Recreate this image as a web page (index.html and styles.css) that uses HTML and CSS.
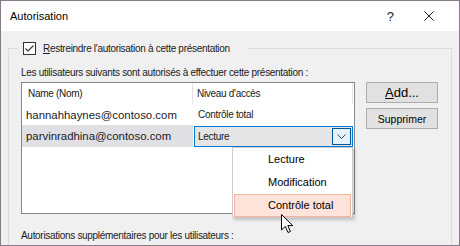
FILE: index.html
```html
<!DOCTYPE html>
<html lang="fr">
<head>
    <meta charset="UTF-8">
    <meta name="viewport" content="width=device-width, initial-scale=1.0">
    <title>Autorisation</title>
    <link rel="stylesheet" href="styles.css">
</head>
<body>
    <div class="dialog">
        <!-- Title bar -->
        <div class="titlebar">
            <span class="title">Autorisation</span>
            <div class="title-buttons">
                <span class="help">?</span>
                <svg class="close" width="10" height="10" viewBox="0 0 10 10">
                    <path d="M0.5 0.5 L9.5 9.5 M9.5 0.5 L0.5 9.5" stroke="#1a1a1a" stroke-width="1" fill="none"/>
                </svg>
            </div>
        </div>

        <!-- Dialog body -->
        <div class="dialog-body">
            <fieldset class="group">
                <legend class="group-legend">
                    <span class="checkbox">
                        <svg width="11" height="11" viewBox="0 0 11 11">
                            <polyline points="1.5,5.5 4,8 9.5,2.5" stroke="#333" stroke-width="1.1" fill="none"/>
                        </svg>
                    </span>
                    <span class="check-label small"><u>R</u>estreindre l'autorisation à cette présentation</span>
                </legend>

                <p class="hint small">Les utilisateurs suivants sont autorisés à effectuer cette présentation :</p>

                <div class="users-row">
                    <div class="user-list">
                        <div class="list-head small">
                            <div class="col-name">Name (Nom)</div>
                            <div class="col-level">Niveau d'accès</div>
                        </div>
                        <div class="list-row">
                            <div class="col-name email">hannahhaynes@contoso.com</div>
                            <div class="col-level level small">Contrôle total</div>
                        </div>
                        <div class="list-row selected">
                            <div class="col-name email">parvinradhina@contoso.com</div>
                            <div class="combo">
                                <span class="combo-value small">Lecture</span>
                                <span class="combo-btn">
                                    <svg width="9" height="5" viewBox="0 0 9 5">
                                        <polyline points="0.5,0.5 4.5,4.5 8.5,0.5" stroke="#444" stroke-width="1" fill="none"/>
                                    </svg>
                                </span>
                            </div>
                        </div>

                        <!-- Open dropdown -->
                        <ul class="combo-menu">
                            <li>Lecture</li>
                            <li>Modification</li>
                            <li class="hover">Contrôle total</li>
                        </ul>

                        <svg class="cursor" width="13" height="20" viewBox="0 0 13 20">
                            <path d="M0.5 0.5 L0.5 16 L4.3 12.4 L7 18.5 L9.4 17.5 L6.8 11.6 L11.8 11.6 Z" fill="#fff" stroke="#000" stroke-width="1" stroke-linejoin="round"/>
                        </svg>
                    </div>

                    <div class="buttons">
                        <button class="btn btn-add"><u>A</u>dd...</button>
                        <button class="btn btn-small">Supprimer</button>
                    </div>
                </div>

                <p class="hint extra small">Autorisations supplémentaires pour les utilisateurs :</p>
            </fieldset>
        </div>
    </div>
</body>
</html>
```

FILE: styles.css
```css
:root {
    --window-border: #867a8b;
    --face: #f0f0f0;
    --text: #1a1a1a;
    --line: #dcdcdc;
    --accent: #0078d7;
}

* {
    margin: 0;
    padding: 0;
    box-sizing: border-box;
    font-family: 'Liberation Sans', Arial, sans-serif;
}

body {
    color: var(--text);
    background-color: #fff;
}

/* small dialog text */
.small {
    font-size: 10px;
    letter-spacing: -0.3px;
}

.dialog {
    width: 460px;
    height: 246px;
    border: 1px solid var(--window-border);
    background-color: var(--face);
    overflow: hidden;
}

.titlebar {
    height: 30px;
    background-color: #fff;
    display: flex;
    align-items: center;
    justify-content: space-between;
    padding: 0 25px 0 9px;
}

.title {
    font-size: 11px;
    color: #000;
}

.title-buttons {
    display: flex;
    align-items: center;
    gap: 30px;
}

.help {
    font-size: 13px;
    color: #1a1a1a;
}

.dialog-body {
    padding: 0 7px;
}

.group {
    margin-top: 10px;
    border: 1px solid var(--line);
    padding: 0 12px;
    height: 220px;
}

.group-legend {
    display: flex;
    align-items: center;
    height: 14px;
    margin-left: -3px;
    padding: 0 17px 0 5px;
}

.checkbox {
    width: 13px;
    height: 13px;
    border: 1px solid #333;
    background-color: #fff;
    display: flex;
    align-items: center;
    justify-content: center;
    margin-right: 7px;
}

.hint {
    line-height: 13px;
    margin-top: 11px;
    margin-bottom: 3px;
}

.hint.extra {
    margin-top: 15px;
}

.users-row {
    display: flex;
    gap: 11px;
}

.user-list {
    position: relative;
    width: 334px;
    height: 132px;
    border: 1px solid #828790;
    background-color: #fff;
}

.list-head,
.list-row {
    display: flex;
    height: 21px;
    align-items: center;
}

.list-head .col-name {
    border-right: 1px solid #e5e5e5;
    padding-left: 6px;
}

.list-head .col-level {
    border-right: 1px solid #e5e5e5;
    padding-left: 4px;
}

.col-name {
    width: 171px;
    height: 100%;
    display: flex;
    align-items: center;
}

.col-level {
    width: 160px;
    height: 100%;
    display: flex;
    align-items: center;
}

.email {
    font-size: 11.4px;
    padding-left: 4px;
}

.level {
    padding-left: 5px;
}

.list-row.selected {
    height: 22px;
    align-items: flex-start;
}

.list-row.selected .col-name {
    background-color: #e0dfe4;
}

.combo {
    width: 159px;
    height: 21px;
    margin-top: 1px;
    margin-left: 1px;
    border: 1px solid var(--accent);
    background-color: #e5e5e5;
    display: flex;
    align-items: center;
    justify-content: space-between;
    padding: 0 1px 0 3px;
}

.combo-btn {
    width: 19px;
    height: 17px;
    border: 1px solid #005499;
    background-color: #e5f1fb;
    display: flex;
    align-items: center;
    justify-content: center;
}

.combo-menu {
    position: absolute;
    left: 210px;
    top: 64px;
    width: 121px;
    list-style: none;
    background-color: #fff;
    border: 1px solid #cccccc;
    box-shadow: 2px 2px 3px rgba(0,0,0,0.2);
    padding: 0 1px;
    font-size: 11px;
}

.combo-menu li {
    height: 23px;
    line-height: 21px;
    padding-left: 33px;
    border: 1px solid transparent;
    color: #000;
}

.combo-menu li.hover {
    background-color: #fde3da;
    border-color: #f4b39e;
}

.cursor {
    position: absolute;
    left: 259px;
    top: 131px;
}

.buttons {
    display: flex;
    flex-direction: column;
    gap: 5px;
}

.btn {
    width: 72px;
    height: 21px;
    background-color: #e1e1e1;
    border: 1px solid #adadad;
    color: #000;
}

.btn-add {
    font-size: 13px;
}

.btn-small {
    font-size: 10.5px;
}
```
